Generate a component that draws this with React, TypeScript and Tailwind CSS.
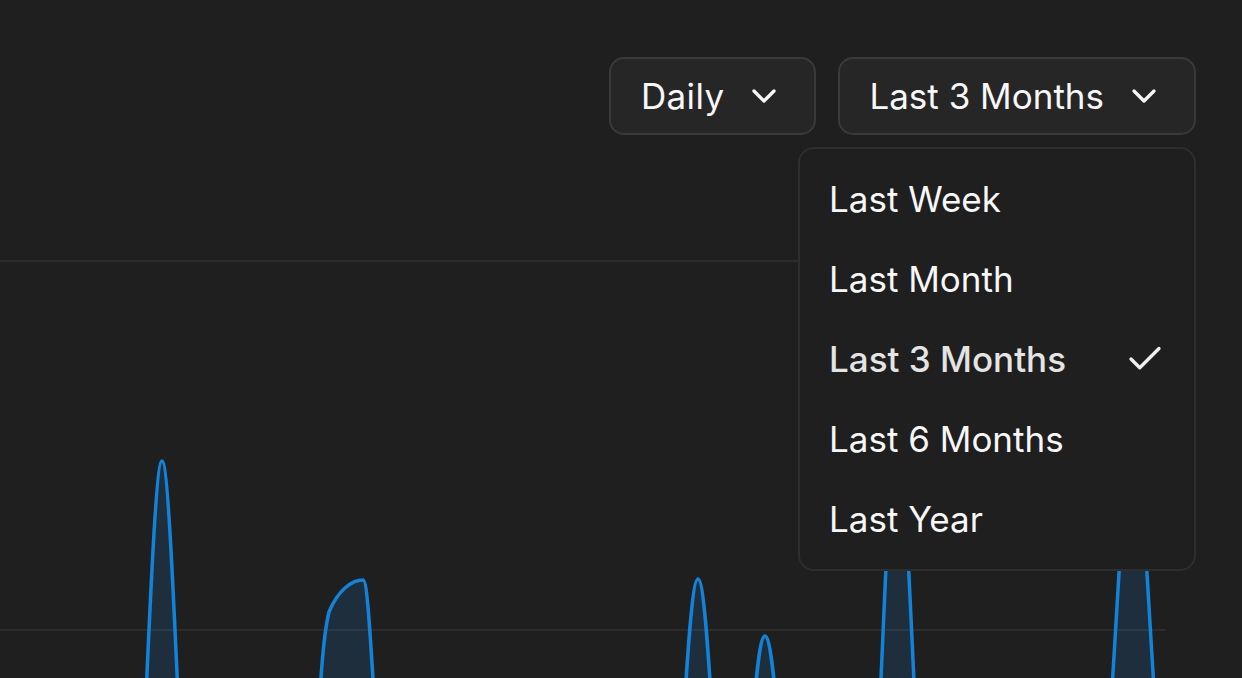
import { Check, ChevronDown } from 'lucide-react';

const ranges = ['Last Week', 'Last Month', 'Last 3 Months', 'Last 6 Months', 'Last Year'];
const selected = 'Last 3 Months';

// hand-tuned spikes, page coordinates (svg viewBox starts at y=135)
const peaks = [
  'M143,760 C148,660 155,461 162,461 C169,461 176,660 181,760',
  'M317,760 C319,700 322,640 329,612 C338,590 352,580 363,580 C368,580 371,650 378,760',
  'M681,760 C687,660 692,579 698,579 C704,579 709,660 715,760',
  'M749,760 C755,690 759,636 765,636 C771,636 775,690 782,760',
  'M875,800 C884,640 890,420 897,420 C904,420 911,640 920,800',
  'M1103,820 C1117,640 1125,420 1133,420 C1141,420 1149,640 1163,820',
];

const App = () => {
  return (
    <div
      className="relative h-[678px] overflow-hidden bg-[#1f1f1f] text-[#f7f7f7]"
      style={{ fontFamily: 'Inter, "Noto Sans", sans-serif' }}
    >
      <div className="flex justify-end gap-[22px] pt-[57px] pr-[46px]">
        <button className="flex h-[78px] items-center gap-[20px] rounded-[15px] border-2 border-[#3a3a3a] bg-[#262626] pl-[30px] pr-[30px] text-[35px] leading-none tracking-[0.01em]">
          <span>Daily</span>
          <ChevronDown size={40} strokeWidth={2} />
        </button>
        <div className="relative">
          <button className="flex h-[78px] items-center gap-[20px] rounded-[15px] border-2 border-[#3a3a3a] bg-[#262626] pl-[29px] pr-[30px] text-[35px] leading-none">
            <span>Last 3 Months</span>
            <ChevronDown size={40} strokeWidth={2} />
          </button>
          <div className="absolute right-0 top-[90px] z-10 w-[398px] rounded-[16px] border-2 border-[#2e2e2e] bg-[#1f1f1f] py-[10px]">
            {ranges.map((r) => (
              <div
                key={r}
                className={
                  r === selected
                    ? 'flex h-[80px] items-center justify-between pl-[29px] pr-[28px] text-[35px] font-medium text-[#e4e4e4]'
                    : 'flex h-[80px] items-center justify-between pl-[29px] pr-[28px] text-[35px]'
                }
              >
                <span>{r}</span>
                {r === selected && <Check size={42} strokeWidth={1.9} className="text-[#f0f0f0]" />}
              </div>
            ))}
          </div>
        </div>
      </div>

      <svg className="block" width={1166} height={543} viewBox="0 135 1166 543">
        <line x1={0} y1={261} x2={1166} y2={261} stroke="#2c2c2c" strokeWidth={2} />
        <line x1={0} y1={630} x2={1166} y2={630} stroke="#2c2c2c" strokeWidth={2} />
        {peaks.map((d, i) => (
          <path key={i} d={d} fill="#1f6fb4" fillOpacity={0.2} stroke="#1283d8" strokeWidth={3.5} />
        ))}
      </svg>
    </div>
  );
};

export default App;
